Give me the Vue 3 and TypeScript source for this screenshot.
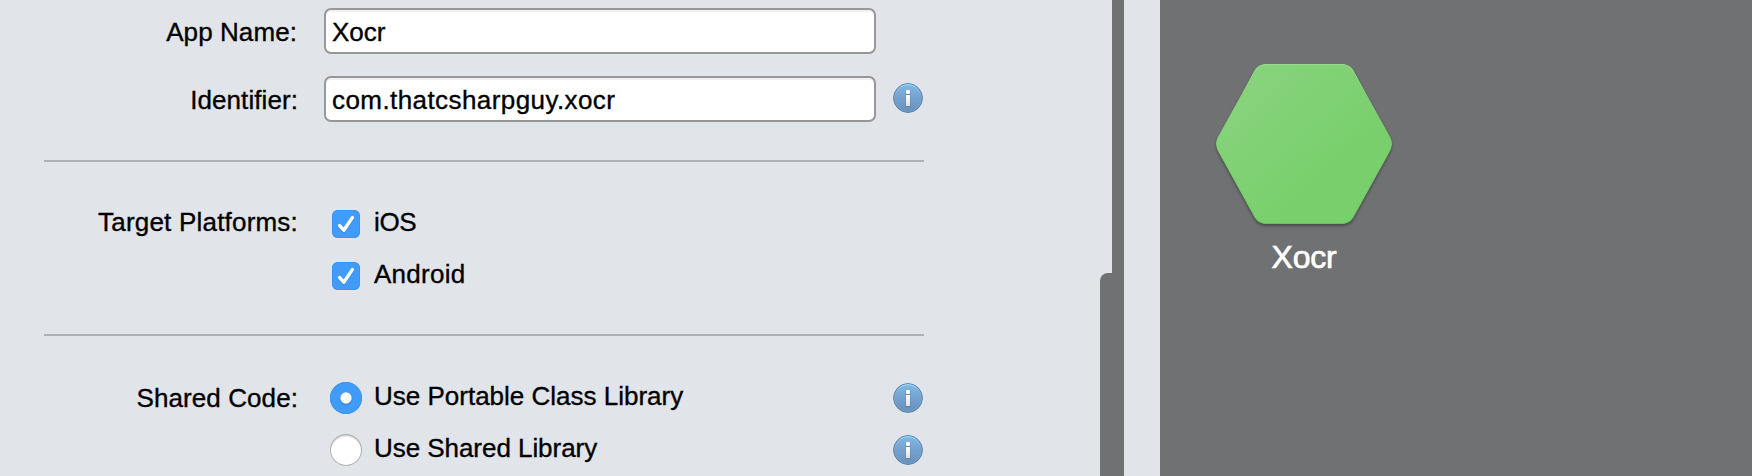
<script setup lang="ts">
import { ref } from 'vue'

interface Platform {
  id: string
  name: string
  checked: boolean
}

interface SharedOption {
  id: string
  name: string
}

const appName = ref('Xocr')
const identifier = ref('com.thatcsharpguy.xocr')

const platforms = ref<Platform[]>([
  { id: 'ios', name: 'iOS', checked: true },
  { id: 'android', name: 'Android', checked: true },
])

const sharedOptions: SharedOption[] = [
  { id: 'pcl', name: 'Use Portable Class Library' },
  { id: 'shared', name: 'Use Shared Library' },
]
const sharedCode = ref('pcl')
</script>

<template>
  <div class="window">
    <form class="form" @submit.prevent>
      <section class="section names">
        <div class="row">
          <label class="label name-label" for="app-name">App Name:</label>
          <input id="app-name" v-model="appName" class="field" type="text" spellcheck="false" />
        </div>
        <div class="row">
          <label class="label" for="identifier">Identifier:</label>
          <input id="identifier" v-model="identifier" class="field identifier" type="text" spellcheck="false" />
          <svg class="info raised" viewBox="0 0 30 30"><use href="#info-icon" /></svg>
        </div>
      </section>

      <section class="section platforms">
        <div v-for="(p, i) in platforms" :key="p.id" class="row option-row">
          <span class="label lifted">{{ i === 0 ? 'Target Platforms:' : '' }}</span>
          <div class="option check-option" @click="p.checked = !p.checked">
            <span class="checkbox" :class="{ on: p.checked }">
              <svg v-if="p.checked" viewBox="0 0 28 28">
                <path d="M7.6 15.6 11.8 20.2 20.4 7.6" transform="translate(0 1.2)" stroke="#2f83da" stroke-opacity=".6" />
                <path d="M7.6 15.6 11.8 20.2 20.4 7.6" stroke="#fff" />
              </svg>
            </span>
            <span class="option-text" :class="p.id">{{ p.name }}</span>
          </div>
        </div>
      </section>

      <section class="section shared-code">
        <div v-for="(o, i) in sharedOptions" :key="o.id" class="row option-row">
          <span class="label">{{ i === 0 ? 'Shared Code:' : '' }}</span>
          <div class="option radio-option" @click="sharedCode = o.id">
            <span class="radio" :class="{ on: sharedCode === o.id }"></span>
            <span class="option-text" :class="o.id">{{ o.name }}</span>
          </div>
          <svg class="info" viewBox="0 0 30 30"><use href="#info-icon" /></svg>
        </div>
      </section>
    </form>

    <div class="rail">
      <div class="rail-top"></div>
      <div class="rail-bottom"></div>
    </div>

    <aside class="preview">
      <div class="app">
        <svg class="hexagon" viewBox="0 0 176 160">
          <defs>
            <linearGradient id="hex-fill" x1="0.1" y1="0.1" x2="0.7" y2="0.7">
              <stop offset="0" stop-color="#88d37d" />
              <stop offset="1" stop-color="#78cf6b" />
            </linearGradient>
            <linearGradient id="hex-edge" x1="0" y1="0" x2="0" y2="1">
              <stop offset="0" stop-color="#9bdb91" />
              <stop offset="0.2" stop-color="#84d378" stop-opacity="0.3" />
              <stop offset="0.7" stop-color="#6cc65e" stop-opacity="0.3" />
              <stop offset="1" stop-color="#68bf5c" />
            </linearGradient>
            <clipPath id="hex-clip">
              <path d="M51 0H126Q133.4 0 137.4 6.5L174.3 73.3Q177.7 80 174.3 86.7L137.4 153.5Q133.4 160 126 160H50Q42.6 160 38.6 153.5L1.7 86.7Q-1.7 80 1.7 73.3L38.6 6.5Q42.6 0 50 0Z" />
            </clipPath>
          </defs>
          <path
            d="M50 0H126Q133.4 0 137.4 6.5L174.3 73.3Q177.7 80 174.3 86.7L137.4 153.5Q133.4 160 126 160H50Q42.6 160 38.6 153.5L1.7 86.7Q-1.7 80 1.7 73.3L38.6 6.5Q42.6 0 50 0Z"
            fill="url(#hex-fill)"
            stroke="url(#hex-edge)"
            stroke-width="2"
            clip-path="url(#hex-clip)"
          />
        </svg>
        <span class="app-name">{{ appName }}</span>
      </div>
    </aside>

    <svg class="symbols" aria-hidden="true">
      <defs>
        <linearGradient id="info-fill" x1="0" y1="0" x2="0" y2="1">
          <stop offset="0" stop-color="#86b9e6" />
          <stop offset="0.5" stop-color="#74a2cf" />
          <stop offset="1" stop-color="#6790b9" />
        </linearGradient>
        <linearGradient id="info-rim" x1="0" y1="0" x2="0" y2="1">
          <stop offset="0" stop-color="#5583aa" />
          <stop offset="1" stop-color="#587fa6" />
        </linearGradient>
        <linearGradient id="info-shine" x1="0" y1="0" x2="0" y2="1">
          <stop offset="0" stop-color="#a0dcff" />
          <stop offset="0.3" stop-color="#8fc0ea" stop-opacity="0.2" />
          <stop offset="1" stop-color="#7eaad0" stop-opacity="0.5" />
        </linearGradient>
        <linearGradient id="info-glyph" x1="0" y1="0" x2="0" y2="1">
          <stop offset="0" stop-color="#ffffff" />
          <stop offset="1" stop-color="#dedede" />
        </linearGradient>
      </defs>
      <symbol id="info-icon" viewBox="0 0 30 30">
        <circle cx="15" cy="15" r="14.4" fill="url(#info-fill)" stroke="url(#info-rim)" stroke-width="1" />
        <circle cx="15" cy="15" r="13.4" fill="none" stroke="url(#info-shine)" stroke-width="1" />
        <path d="M12.6 7.9h4.8v4h-4.8zM12.6 13.3h4.8V24.2h-4.8z" fill="#41668c" fill-opacity=".45" />
        <rect x="13" y="7" width="4" height="4" rx="1" fill="#fff" />
        <rect x="13" y="12" width="4" height="11" fill="url(#info-glyph)" />
      </symbol>
    </svg>
  </div>
</template>

<style>
body {
  margin: 0;
  overflow: hidden;
}
</style>

<style scoped>
.window {
  display: flex;
  width: 1752px;
  height: 476px;
  overflow: hidden;
  background: #e1e4e9;
  color: #000;
  font: 26px/30px "Liberation Sans", Arial, sans-serif;
  -webkit-text-stroke: 0.35px currentColor;
}

.form {
  box-sizing: border-box;
  width: 1100px;
  padding-left: 44px;
}

.section {
  box-sizing: border-box;
  width: 880px;
}

.names {
  display: flex;
  flex-direction: column;
  gap: 22px;
  height: 162px;
  padding-top: 8px;
  border-bottom: 2px solid #afb1b4;
}

.platforms {
  height: 174px;
  padding-top: 36px;
  border-bottom: 2px solid #afb0b4;
}

.shared-code {
  padding-top: 36px;
}

.row {
  display: grid;
  grid-template-columns: 280px 569px 30px;
  align-items: center;
  height: 46px;
}

.option-row {
  height: 52px;
}

.label {
  padding-right: 26px;
  letter-spacing: 0.08px;
  text-align: right;
  white-space: nowrap;
}

.names .label {
  padding-top: 2px;
}

.names .name-label {
  padding-right: 27px;
}

.platforms .label {
  padding-bottom: 4px;
  letter-spacing: 0.2px;
}

.field {
  box-sizing: border-box;
  width: 552px;
  height: 46px;
  margin: 0;
  padding: 2px 6px 0;
  border: 2px solid #979797;
  border-radius: 7px;
  outline: none;
  background: #fff;
  box-shadow: inset 0 2px 0 #f0f0f0;
  color: inherit;
  font: inherit;
  -webkit-text-stroke: inherit;
}

.identifier {
  letter-spacing: 0.42px;
}

.info {
  display: block;
  width: 30px;
  height: 30px;
}

.raised {
  margin-bottom: 2px;
}

.option {
  display: flex;
  align-items: center;
}

.check-option {
  gap: 14px;
  padding-left: 8px;
}

.radio-option {
  gap: 12px;
  padding-left: 6px;
}

.option-text {
  padding-bottom: 4px;
  white-space: nowrap;
}

.option-text.ios {
  letter-spacing: -0.4px;
}

.option-text.android {
  letter-spacing: 0.25px;
}

.option-text.shared {
  letter-spacing: -0.05px;
}

.checkbox {
  width: 28px;
  height: 28px;
  border-radius: 6px;
  background: #fff;
}

.checkbox.on {
  background: #419bf9;
  box-shadow: inset 0 0 0 1px #3a92f2;
}

.checkbox svg {
  display: block;
  fill: none;
  stroke-width: 3.4;
  stroke-linecap: round;
  stroke-linejoin: round;
}

.radio {
  display: flex;
  align-items: center;
  justify-content: center;
  width: 32px;
  height: 32px;
  border-radius: 50%;
  background: #fff;
  box-shadow: inset 0 0 0 1px #b2b2b4, inset 0 2px 2px #c4c4c4;
}

.radio.on {
  background: #419bf9;
  box-shadow: inset 0 0 0 1px #3d96f5;
}

.radio.on::after {
  width: 12px;
  height: 12px;
  border-radius: 50%;
  background: #fff;
  box-shadow: 0 1px 2px #2878cc;
  content: "";
  transform: scale(0.94);
}

.rail {
  display: flex;
  flex-direction: column;
  width: 24px;
  margin-right: 36px;
}

.rail-top {
  height: 273px;
  margin-left: 12px;
  background: #707173;
}

.rail-bottom {
  flex: 1;
  border-top-left-radius: 8px;
  background: #707173;
}

.preview {
  flex: 1;
  padding: 64px 0 0 56px;
  background: #707173;
}

.app {
  display: flex;
  flex-direction: column;
  align-items: center;
  width: 176px;
}

.hexagon {
  display: block;
  width: 176px;
  height: 160px;
  overflow: visible;
  filter: drop-shadow(0 2px 1.5px rgba(0, 0, 0, 0.35));
}

.app-name {
  margin-top: 15px;
  color: #fff;
  font-size: 32px;
  line-height: 36px;
  letter-spacing: -0.2px;
  -webkit-text-stroke-width: 0.7px;
}

.symbols {
  position: absolute;
  width: 0;
  height: 0;
}
</style>
